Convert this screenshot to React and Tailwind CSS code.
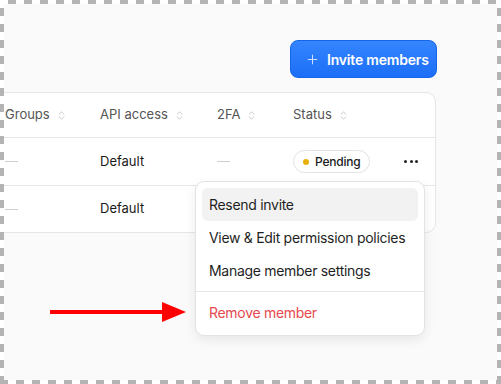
import { ChevronsUpDown, Plus } from "lucide-react";

const font = { fontFamily: "Inter, 'Liberation Sans', sans-serif" };

function SortHead({ label, className }) {
  return (
    <div className={`flex items-center gap-1.5 ${className}`}>
      <span>{label}</span>
      <ChevronsUpDown size={11} strokeWidth={1.5} className="text-[#b0b0b0]" />
    </div>
  );
}

function Dash() {
  return <span className="block w-[13px] h-px bg-[#cfcfcf]" />;
}

export default function App() {
  return (
    <div
      className="w-[501px] h-[384px] p-[4px] bg-[repeating-conic-gradient(#b4b4b4_0_25%,#ffffff_0_50%)] bg-[length:16px_16px]"
      style={font}
    >
      <div className="relative w-full h-full bg-[#fafafa] overflow-hidden flex flex-col">
        <div className="flex justify-end pr-[60px] pt-[36px]">
          <button className="h-[38px] w-[147px] flex items-center gap-[7px] pl-[14px] rounded-[8px] border border-[#1565e8] bg-gradient-to-b from-[#3585ff] to-[#1b6ef6] text-white text-[14px] font-semibold tracking-[-0.2px] whitespace-nowrap">
            <Plus size={15} strokeWidth={1.6} className="text-[#cfe0ff]" />
            Invite members
          </button>
        </div>

        <div className="mt-[14px] ml-[-40px] w-[472px] bg-white border border-[#e6e6e6] rounded-[10px] text-[13px]">
          <div className="flex items-center h-[44px] text-[#555]">
            <SortHead label="Groups" className="w-[135px] pl-[40px]" />
            <SortHead label="API access" className="w-[117px]" />
            <SortHead label="2FA" className="w-[76px]" />
            <SortHead label="Status" className="w-[100px]" />
          </div>
          <div className="flex items-center h-[48px] border-t border-[#e6e6e6] text-[#1a1a1a]">
            <div className="w-[135px] pl-[40px]"><Dash /></div>
            <div className="w-[117px]">Default</div>
            <div className="w-[76px]"><Dash /></div>
            <div className="w-[100px]">
              <span className="inline-flex items-center gap-[6px] h-[23px] pl-[9px] pr-[8px] rounded-full border border-[#e3e3e3] text-[12px] font-medium tracking-[-0.2px]">
                <span className="w-[6px] h-[6px] rounded-full bg-[#e8b10a]" />
                Pending
              </span>
            </div>
            <div className="flex-1 flex items-center gap-[2.5px] pl-[11px]">
              <span className="w-[3px] h-[3px] rounded-full bg-[#222]" />
              <span className="w-[3px] h-[3px] rounded-full bg-[#222]" />
              <span className="w-[3px] h-[3px] rounded-full bg-[#222]" />
            </div>
          </div>
          <div className="flex items-center h-[47px] border-t border-[#e6e6e6] text-[#1a1a1a]">
            <div className="w-[135px] pl-[40px]"><Dash /></div>
            <div className="w-[117px]">Default</div>
          </div>
        </div>

        <div className="absolute left-[191px] top-[177px] w-[230px] p-[6px] bg-white border border-[#e3e3e3] rounded-[9px] shadow-[0_4px_12px_rgba(0,0,0,0.08)] text-[14px] tracking-[-0.3px] whitespace-nowrap text-[#1f1f1f]">
          <div className="h-[33px] flex items-center px-[7px] rounded-[6px] bg-[#f2f2f2]">Resend invite</div>
          <div className="h-[33px] flex items-center px-[7px]">View &amp; Edit permission policies</div>
          <div className="h-[33px] flex items-center px-[7px]">Manage member settings</div>
          <div className="h-px bg-[#e6e6e6] mx-[-6px] my-[4px]" />
          <div className="h-[33px] flex items-center px-[7px] text-[#e5484d]">Remove member</div>
        </div>

        <svg className="absolute left-[44px] top-[296px]" width="142" height="24" viewBox="0 0 142 24">
          <line x1="2" y1="12" x2="116" y2="12" stroke="#f00" strokeWidth="4" />
          <polygon points="114,2 138,12 114,22" fill="#f00" />
        </svg>
      </div>
    </div>
  );
}
